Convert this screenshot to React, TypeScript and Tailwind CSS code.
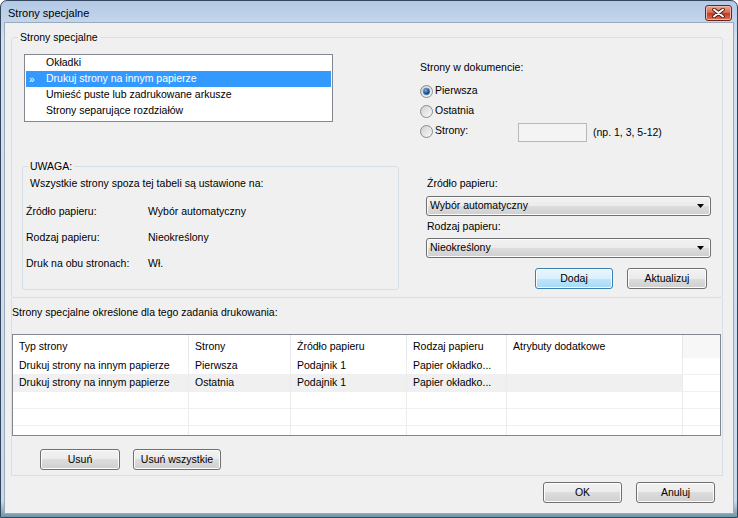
import React from "react";

const btnBase =
  "h-[21px] flex items-center justify-center rounded-[3px] border shadow-[inset_0_0_0_1px_#fcfcfc]";
const btnGray =
  "border-[#707070] bg-[linear-gradient(#f2f2f2,#ebebeb_50%,#dddddd_50%,#cfcfcf)]";
const btnDefault =
  "border-[#3c7fb1] bg-[linear-gradient(#eaf6fd,#d9f0fc_50%,#bee6fd_50%,#a7d9f5)]";

function Button({ label, w, def }: { label: string; w: string; def?: boolean }) {
  return <div className={`${btnBase} ${def ? btnDefault : btnGray} ${w}`}>{label}</div>;
}

function Combo({ value }: { value: string }) {
  return (
    <div
      className={`ml-[6px] w-[285px] h-[20px] flex items-center justify-between rounded-[3px] border pl-[3px] pr-[6px] ${btnGray} shadow-[inset_0_0_0_1px_#fcfcfc]`}
    >
      <span>{value}</span>
      <svg width="7" height="4" viewBox="0 0 7 4">
        <path d="M0 0 H7 L3.5 4 Z" fill="#000" />
      </svg>
    </div>
  );
}

function Radio({ checked }: { checked?: boolean }) {
  return (
    <svg width="13" height="13" viewBox="0 0 13 13" className="shrink-0">
      <defs>
        <linearGradient id="rg" x1="0" y1="0" x2="1" y2="1">
          <stop offset="0" stopColor="#cfcfcf" />
          <stop offset="1" stopColor="#fbfbfb" />
        </linearGradient>
        <radialGradient id="rd" cx="0.4" cy="0.35" r="0.7">
          <stop offset="0" stopColor="#7fb2e6" />
          <stop offset="0.6" stopColor="#1d4f8f" />
          <stop offset="1" stopColor="#17375f" />
        </radialGradient>
      </defs>
      <circle cx="6.5" cy="6.5" r="6" fill="url(#rg)" stroke="#8c8c8c" />
      {checked && <circle cx="6.5" cy="6.5" r="3.4" fill="url(#rd)" stroke="#6d9ccf" strokeWidth="0.8" />}
    </svg>
  );
}

const listItems = [
  "Okładki",
  "Drukuj strony na innym papierze",
  "Umieść puste lub zadrukowane arkusze",
  "Strony separujące rozdziałów",
];

const cols = ["w-[176px]", "w-[102px]", "w-[116px]", "w-[100px]", "w-[176px]", "flex-1"];
const headers = ["Typ strony", "Strony", "Źródło papieru", "Rodzaj papieru", "Atrybuty dodatkowe", ""];
const rows = [
  ["Drukuj strony na innym papierze", "Pierwsza", "Podajnik 1", "Papier okładko...", "", ""],
  ["Drukuj strony na innym papierze", "Ostatnia", "Podajnik 1", "Papier okładko...", "", ""],
  ["", "", "", "", "", ""],
  ["", "", "", "", "", ""],
  ["", "", "", "", "", ""],
];

export default function App() {
  return (
    <div className="w-[738px] h-[518px] flex flex-col border border-[#32465c] rounded-t-[7px] overflow-hidden bg-[linear-gradient(#b3c9e6,#d3e0f0_40px,#cbdaeb_500px,#6f95a8)] font-['Liberation_Sans',Arial,sans-serif] text-[10.5px] text-black">
      {/* title bar */}
      <div className="h-[21px] flex items-start justify-between">
        <div className="pl-[7px] pt-[6px] text-[11px] leading-[13px] text-black">Strony specjalne</div>
        <div className="mt-[4px] mr-[5px] w-[27px] h-[16px] rounded-[3px] border border-[#6e2418] bg-[linear-gradient(#eaa99a,#d7644c_50%,#c4381d_50%,#d9715b)] flex items-center justify-center shadow-[inset_0_0_0_1px_#f1b8aa]">
          <svg width="13" height="10" viewBox="0 0 13 10">
            <path d="M2 1.5 L11 8.5 M11 1.5 L2 8.5" stroke="#4b1208" strokeWidth="3.6" strokeLinecap="round" />
            <path d="M2 1.5 L11 8.5 M11 1.5 L2 8.5" stroke="#fff" strokeWidth="2" strokeLinecap="round" />
          </svg>
        </div>
      </div>

      {/* client area */}
      <div className="mx-[3px] h-[492px] border border-[#9aaabd] bg-[#f0f0f0] flex flex-col">
        {/* main group */}
        <fieldset className="ml-[6px] mt-[8px] w-[712px] h-[267px] border border-[#d5dfe5] rounded-[3px]">
          <legend className="ml-[6px] px-[2px] leading-[13px]">Strony specjalne</legend>
          <div className="flex">
            <div className="w-[408px] flex flex-col">
              <div className="ml-[12px] mt-[10px] w-[309px] h-[68px] border border-[#828790] bg-white px-[1px] flex flex-col">
                {listItems.map((t, i) => (
                  <div
                    key={t}
                    className={`h-[16px] flex items-center ${i === 1 ? "bg-[#3399ff] text-white" : ""}`}
                  >
                    <span className="w-[20px] pl-[3px] text-[10px]">{i === 1 ? "»" : ""}</span>
                    <span>{t}</span>
                  </div>
                ))}
              </div>

              <fieldset className="ml-[10px] mt-[38px] w-[377px] h-[130px] border border-[#d5dfe5] rounded-[3px]">
                <legend className="ml-[5px] px-[2px] leading-[13px]">UWAGA:</legend>
                <div className="mt-[3px] pl-[7px] h-[14px] leading-[14px]">
                  Wszystkie strony spoza tej tabeli są ustawione na:
                </div>
                <div className="pl-[3px] mt-[14px] flex flex-col gap-[12px]">
                  {[
                    ["Źródło papieru:", "Wybór automatyczny"],
                    ["Rodzaj papieru:", "Nieokreślony"],
                    ["Druk na obu stronach:", "Wł."],
                  ].map(([a, b]) => (
                    <div key={a} className="h-[14px] leading-[14px] flex">
                      <span className="w-[122px]">{a}</span>
                      <span>{b}</span>
                    </div>
                  ))}
                </div>
              </fieldset>
            </div>

            <div className="w-[302px] flex flex-col">
              <div className="mt-[16px] h-[14px] leading-[14px]">Strony w dokumencie:</div>
              <div className="mt-[7px] flex flex-col">
                <div className="h-[20px] flex items-center gap-[2px]">
                  <Radio checked />
                  <span>Pierwsza</span>
                </div>
                <div className="h-[20px] flex items-center gap-[2px]">
                  <Radio />
                  <span>Ostatnia</span>
                </div>
                <div className="h-[20px] flex items-center gap-[2px]">
                  <Radio />
                  <span className="w-[81px]">Strony:</span>
                  <div className="mt-[3px] w-[69px] h-[19px] border border-[#b5b8bd] bg-[#f4f4f4]" />
                  <span className="ml-[4px] mt-[3px]">(np. 1, 3, 5-12)</span>
                </div>
              </div>
              <div className="mt-[35px] ml-[7px] h-[14px] leading-[14px]">Źródło papieru:</div>
              <div className="mt-[6px]">
                <Combo value="Wybór automatyczny" />
              </div>
              <div className="mt-[3px] ml-[7px] h-[14px] leading-[14px]">Rodzaj papieru:</div>
              <div className="mt-[5px]">
                <Combo value="Nieokreślony" />
              </div>
              <div className="mt-[10px] ml-[6px] w-[285px] flex justify-end gap-[14px] pr-[4px]">
                <Button label="Dodaj" w="w-[78px]" def />
                <Button label="Aktualizuj" w="w-[80px]" />
              </div>
            </div>
          </div>
        </fieldset>

        {/* bottom panel */}
        <div className="ml-[6px] w-[712px] h-[178px] border-l border-r border-b border-[#d5dfe5] flex flex-col">
          <div className="mt-[7px] h-[14px] leading-[14px]">
            Strony specjalne określone dla tego zadania drukowania:
          </div>
          <div className="mt-[15px] w-[709px] h-[102px] border border-[#828790] bg-white overflow-hidden flex flex-col">
            <div className="h-[23px] flex shrink-0">
              {headers.map((h, i) => (
                <div
                  key={i}
                  className={`${cols[i]} h-full flex items-center pl-[6px] ${
                    i < 5 ? "border-r border-[#e3e6ea]" : "bg-[#f7f7f7]"
                  }`}
                >
                  {h}
                </div>
              ))}
            </div>
            {rows.map((r, ri) => (
              <div key={ri} className="h-[17px] flex shrink-0">
                {r.map((c, ci) => (
                  <div
                    key={ci}
                    className={`${cols[ci]} h-full flex items-center pl-[6px] border-b border-[#f0f0f0] ${
                      ci < 5 ? "border-r border-r-[#ececec]" : ""
                    } ${ri === 1 && ci < 5 ? "bg-[#f0f0f0]" : ""}`}
                  >
                    {c}
                  </div>
                ))}
              </div>
            ))}
          </div>
          <div className="mt-[13px] ml-[28px] flex gap-[13px]">
            <Button label="Usuń" w="w-[80px]" />
            <Button label="Usuń wszystkie" w="w-[88px]" />
          </div>
        </div>

        {/* dialog buttons */}
        <div className="mt-[6px] pr-[18px] flex justify-end gap-[14px]">
          <Button label="OK" w="w-[79px]" />
          <Button label="Anuluj" w="w-[79px]" />
        </div>
      </div>
    </div>
  );
}
